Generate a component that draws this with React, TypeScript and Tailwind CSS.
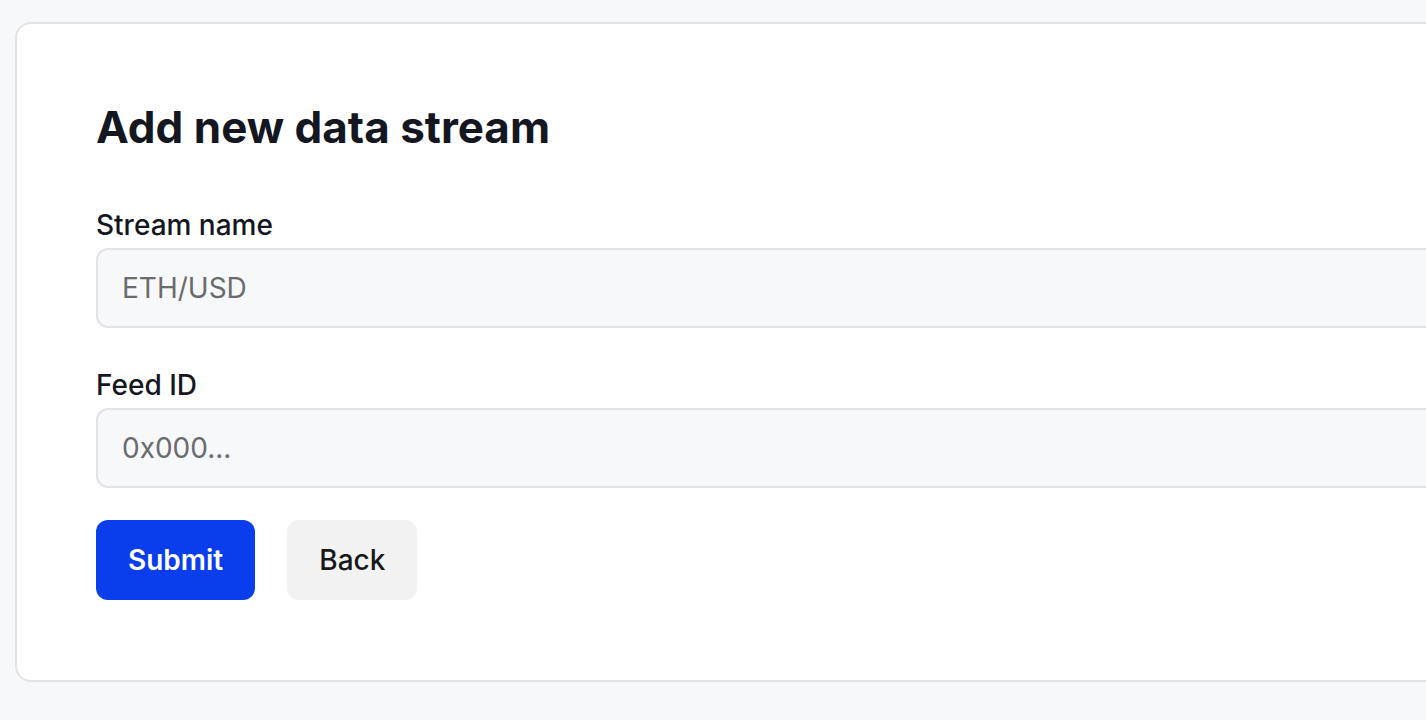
import React from "react";

export default function App() {
  return (
    <div
      className="w-[1426px] h-[720px] overflow-hidden bg-[#f7f8fa] pt-[22px] pl-[15px]"
      style={{ fontFamily: "Inter, 'Noto Sans', sans-serif" }}
    >
      <div className="w-[1700px] bg-white border-2 border-[#e3e3e5] rounded-[16px] pt-[79px] px-[79px] pb-[80px]">
        <h1 className="text-[44px] leading-[48px] font-bold text-[#14171f]">
          Add new data stream
        </h1>
        <form className="mt-[56px] flex flex-col" onSubmit={(e) => e.preventDefault()}>
          <label className="text-[28px] leading-[36px] font-medium text-[#14171f]">Stream name</label>
          <input
            className="mt-[5px] h-[80px] w-full rounded-[12px] border-2 border-[#e3e3e5] bg-[#f7f8fa] px-[24px] text-[28px] text-[#14171f] placeholder:text-[#6b6b6e] outline-none"
            placeholder="ETH/USD"
          />
          <label className="mt-[39px] text-[28px] leading-[36px] font-medium text-[#14171f]">Feed ID</label>
          <input
            className="mt-[5px] h-[80px] w-full rounded-[12px] border-2 border-[#e3e3e5] bg-[#f7f8fa] px-[24px] text-[28px] text-[#14171f] placeholder:text-[#6b6b6e] outline-none"
            placeholder="0x000..."
          />
          <div className="mt-[32px] flex gap-[32px]">
            <button
              type="submit"
              className="h-[80px] px-[32px] rounded-[12px] bg-[#0a3dec] text-white text-[28px] font-semibold"
            >
              Submit
            </button>
            <button
              type="button"
              className="h-[80px] px-[32px] rounded-[12px] bg-[#f2f2f3] text-[#18181b] text-[28px] font-medium"
            >
              Back
            </button>
          </div>
        </form>
      </div>
    </div>
  );
}
